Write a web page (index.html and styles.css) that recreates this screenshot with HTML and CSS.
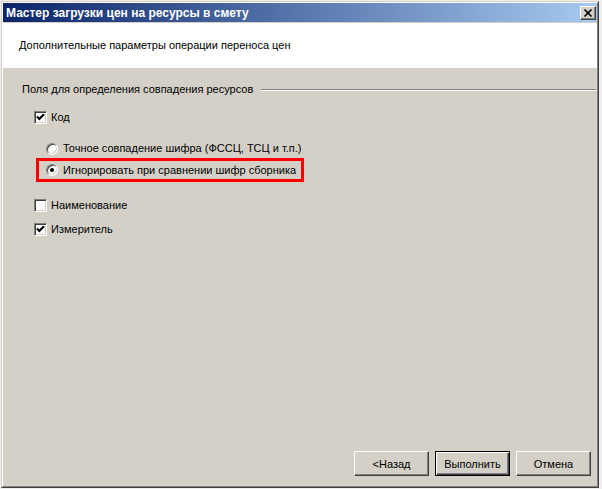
FILE: index.html
```html
<!DOCTYPE html>
<html lang="ru">
	<head>
		<meta charset="utf-8" />
		<title>Мастер загрузки цен на ресурсы в смету</title>
		<link rel="stylesheet" href="styles.css">
	</head>

	<body>
		<div class="dialog">
			<div class="frame">
				<div class="caption">
					<span class="captionText">Мастер загрузки цен на ресурсы в смету</span>
					<span class="closeBtn">
						<svg width="14" height="12" viewBox="0 0 14 12">
							<path d="M3.5 2.5 L10.5 9.5 M10.5 2.5 L3.5 9.5" stroke="#000" stroke-width="1.7" fill="none"/>
						</svg>
					</span>
				</div>

				<div class="header">Дополнительные параметры операции переноса цен</div>

				<div class="body">
					<div class="groupTitle">
						<span>Поля для определения совпадения ресурсов</span>
						<i class="etched"></i>
					</div>

					<label class="row rowCode">
						<span class="check checked"></span>
						<span>Код</span>
					</label>

					<label class="row rowRadio">
						<span class="radio"></span>
						<span>Точное совпадение шифра (ФССЦ, ТСЦ и т.п.)</span>
					</label>

					<div class="highlight">
						<label class="row">
							<span class="radio on"></span>
							<span>Игнорировать при сравнении шифр сборника</span>
						</label>
					</div>

					<label class="row rowName">
						<span class="check"></span>
						<span>Наименование</span>
					</label>

					<label class="row rowUnit">
						<span class="check checked"></span>
						<span>Измеритель</span>
					</label>

					<div class="buttons">
						<button class="btn">&lt;Назад</button>
						<button class="btn default">Выполнить</button>
						<button class="btn">Отмена</button>
					</div>
				</div>
			</div>
		</div>
	</body>
</html>
```

FILE: styles.css
```css
*{
	padding:0;
	margin:0;
	box-sizing: border-box;
}
body {
	width: 602px;
	height: 489px;
	overflow: hidden;
	background-color: #eeeeee;
	font-family: "Liberation Sans", Arial, sans-serif;
	font-size: 11px;
	color: #000;
}
.dialog {
	width: 598px;
	height: 487px;
	margin: 1px 0 0 1px;
	border: 1px solid;
	border-color: #d4d0c8 #404040 #404040 #d4d0c8;
}
.frame {
	height: 100%;
	display: flex;
	flex-direction: column;
	background-color: #d4d0c8;
	border: 1px solid;
	border-color: #fff #808080 #808080 #fff;
}
.caption {
	height: 19px;
	margin-bottom: 1px;
	padding: 0 1px 0 3px;
	display: flex;
	align-items: center;
	justify-content: space-between;
	background: linear-gradient(to right, #0a246a, #a6caf0);
}
.captionText {
	color: #fff;
	font-weight: bold;
	font-size: 12px;
}
.closeBtn {
	width: 16px;
	height: 14px;
	display: flex;
	align-items: center;
	justify-content: center;
	background-color: #d4d0c8;
	border: 1px solid;
	border-color: #fff #404040 #404040 #fff;
	box-shadow: inset -1px -1px 0 #808080;
}
.header {
	height: 45px;
	padding: 0 0 1px 16px;
	display: flex;
	align-items: center;
	background-color: #fff;
}
.body {
	flex: 1;
	display: flex;
	flex-direction: column;
	padding: 0 6px 10px 0;
}
.groupTitle {
	margin: 15px 0 0 19px;
	height: 13px;
	line-height: 13px;
	display: flex;
	align-items: center;
}
.etched {
	flex: 1;
	height: 2px;
	margin: 0 -5px 0 8px;
	border-top: 1px solid #808080;
	border-bottom: 1px solid #fff;
}
.row {
	height: 13px;
	line-height: 13px;
	display: flex;
	align-items: center;
	gap: 4px;
}
.rowCode {
	margin: 15px 0 0 31px;
}
.rowRadio {
	margin: 18px 0 0 43px;
}
.rowName {
	margin: 17px 0 0 31px;
}
.rowUnit {
	margin: 11px 0 0 31px;
}
.rowRadio,
.highlight .row {
	gap: 5px;
}
.highlight {
	width: 268px;
	height: 24px;
	margin: 3px 0 0 33px;
	padding-left: 7px;
	display: flex;
	align-items: center;
	border: 3px solid #ff0000;
}
.check {
	width: 13px;
	height: 13px;
	flex: none;
	background-color: #fff;
	border: 1px solid;
	border-color: #808080 #fff #fff #808080;
	box-shadow: inset 1px 1px 0 #404040, inset -1px -1px 0 #d4d0c8;
}
.check.checked {
	background: #fff url("data:image/svg+xml,%3Csvg xmlns='http://www.w3.org/2000/svg' width='11' height='11'%3E%3Cpath d='M2 4.5 L4.3 7 L9 2.3' stroke='%23000' stroke-width='2.2' fill='none'/%3E%3C/svg%3E") no-repeat center;
}
.radio {
	width: 12px;
	height: 12px;
	flex: none;
	border-radius: 50%;
	background-color: #fff;
	border: 1px solid;
	border-color: #808080 #fff #fff #808080;
	box-shadow: inset 1px 1px 0 #404040, inset -1px -1px 0 #d4d0c8;
	display: flex;
	align-items: center;
	justify-content: center;
}
.radio.on::after {
	content: "";
	width: 4px;
	height: 4px;
	border-radius: 50%;
	background-color: #000;
}
.buttons {
	margin-top: auto;
	display: flex;
	justify-content: flex-end;
	gap: 6px;
}
.btn {
	width: 75px;
	height: 25px;
	font-family: inherit;
	font-size: 11px;
	color: #000;
	background-color: #d4d0c8;
	border: 1px solid;
	border-color: #fff #404040 #404040 #fff;
	box-shadow: inset -1px -1px 0 #808080;
}
.btn.default {
	border: 1px solid #000;
	box-shadow: inset 1px 1px 0 #fff, inset -1px -1px 0 #404040, inset -2px -2px 0 #808080;
}
```
